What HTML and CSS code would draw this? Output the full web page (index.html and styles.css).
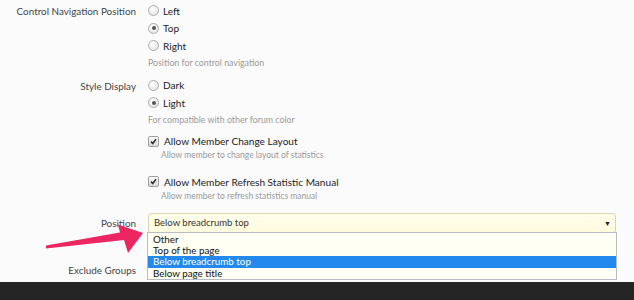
FILE: index.html
```html
<!DOCTYPE html>
<html lang="en">
<head>
    <meta charset="UTF-8">
    <title>Statistics Options</title>
    <link rel="stylesheet" href="styles.css">
</head>
<body>
    <div class="form">
        <!-- Control navigation -->
        <div class="row row-nav">
            <div class="label">Control Navigation Position</div>
            <div class="field">
                <div class="choice"><span class="radio"></span>Left</div>
                <div class="choice"><span class="radio checked"></span>Top</div>
                <div class="choice"><span class="radio"></span>Right</div>
                <div class="hint">Position for control navigation</div>
            </div>
        </div>

        <!-- Style display -->
        <div class="row row-style">
            <div class="label">Style Display</div>
            <div class="field">
                <div class="choice"><span class="radio"></span>Dark</div>
                <div class="choice"><span class="radio checked"></span>Light</div>
                <div class="hint">For compatible with other forum color</div>
            </div>
        </div>

        <div class="row row-check">
            <div class="label"></div>
            <div class="field">
                <div class="choice"><span class="checkbox"><svg viewBox="0 0 10 10"><path d="M2.2 5.2 L4.2 7.2 L7.8 2.4" /></svg></span>Allow Member Change Layout</div>
                <div class="hint small">Allow member to change layout of statistics</div>
            </div>
        </div>

        <div class="row row-check2">
            <div class="label"></div>
            <div class="field">
                <div class="choice"><span class="checkbox"><svg viewBox="0 0 10 10"><path d="M2.2 5.2 L4.2 7.2 L7.8 2.4" /></svg></span>Allow Member Refresh Statistic Manual</div>
                <div class="hint small">Allow member to refresh statistics manual</div>
            </div>
        </div>

        <!-- Position select with open list -->
        <div class="row row-position">
            <div class="label">Position</div>
            <div class="field">
                <div class="select">
                    <span>Below breadcrumb top</span>
                    <span class="caret">&#9660;</span>
                </div>
                <ul class="options">
                    <li>Other</li>
                    <li>Top of the page</li>
                    <li class="selected">Below breadcrumb top</li>
                    <li>Below page title</li>
                </ul>
            </div>
        </div>

        <div class="row row-groups">
            <div class="label">Exclude Groups</div>
            <div class="field"></div>
        </div>
    </div>

    <svg class="pointer" width="160" height="60" viewBox="40 220 160 60">
        <polygon points="46,245.5 120,232.5 118,224.5 143,233 128,253 124,240 46,248.5" fill="#ec2660" />
    </svg>

    <div class="footer"></div>
</body>
</html>
```

FILE: styles.css
```css
body {
    margin: 0;
    padding: 0;
    background-color: #fbfbfc;
    font-family: "Lato", "Open Sans", sans-serif;
    font-size: 10px;
    color: #333;
    height: 300px;
    overflow: hidden;
    position: relative;
}
.form {
    padding-top: 2px;
}
.row {
    display: flex;
    gap: 12px;
}
.label {
    width: 136px;
    flex: none;
    text-align: right;
    color: #444;
    font-size: 9.9px;
    line-height: 18px;
}
.field {
    flex: 1;
    padding-right: 18px;
    position: relative;
}
.choice {
    display: flex;
    align-items: center;
    height: 17.5px;
    color: #222;
    font-size: 10.1px;
}
.radio {
    width: 9px;
    height: 9px;
    border-radius: 50%;
    border: 1px solid #acacac;
    background: radial-gradient(circle at 40% 35%, #fff 0, #e8e8e8 70%, #d2d2d2 100%);
    margin-right: 4px;
    position: relative;
    flex: none;
}
.radio.checked::after {
    content: "";
    position: absolute;
    left: 2.5px;
    top: 2.5px;
    width: 4px;
    height: 4px;
    border-radius: 50%;
    background: #555;
}
.checkbox {
    width: 9px;
    height: 9px;
    border: 1px solid #a0a0a0;
    border-radius: 2px;
    background: linear-gradient(#fafafa, #dcdcdc);
    margin-right: 5px;
    flex: none;
    display: flex;
}
.checkbox svg {
    width: 9px;
    height: 9px;
}
.checkbox path {
    fill: none;
    stroke: #333;
    stroke-width: 1.8;
}
.hint {
    color: #9a9a9a;
    font-size: 8.8px;
    line-height: 16px;
}
.hint.small {
    line-height: 10px;
    padding-left: 13px;
    font-size: 8.5px;
}
.row-style {
    margin-top: 6px;
}
.row-check {
    margin-top: 5px;
}
.row-check2 {
    margin-top: 13px;
}
.row-position {
    margin-top: 12px;
}
.row-position .label {
    line-height: 20px;
}
.select {
    height: 18px;
    border: 1px solid #d9d5b5;
    border-radius: 3px;
    background: linear-gradient(#fffeea, #fffbdf);
    display: flex;
    align-items: center;
    justify-content: space-between;
    padding: 0 4px 0 5px;
    color: #333;
    font-size: 9.5px;
}
.caret {
    font-size: 7px;
    color: #222;
}
.options {
    position: absolute;
    top: 19px;
    left: -1px;
    right: 17px;
    margin: 0;
    padding: 1px 0 0;
    list-style: none;
    background: #fffff3;
    border: 1px solid #b9bcc2;
    font-size: 9.8px;
    color: #111;
    z-index: 2;
}
.options li {
    height: 11.4px;
    line-height: 11.4px;
    padding-left: 5px;
}
.options li.selected {
    background: #2389ec;
    color: #fff;
}
.row-groups {
    margin-top: 30px;
}
.row-groups .label {
    line-height: 14px;
}
.pointer {
    position: absolute;
    left: 40px;
    top: 220px;
    z-index: 3;
}
.footer {
    position: absolute;
    left: 0;
    right: 0;
    top: 282px;
    bottom: 0;
    background: #252525;
}
```
